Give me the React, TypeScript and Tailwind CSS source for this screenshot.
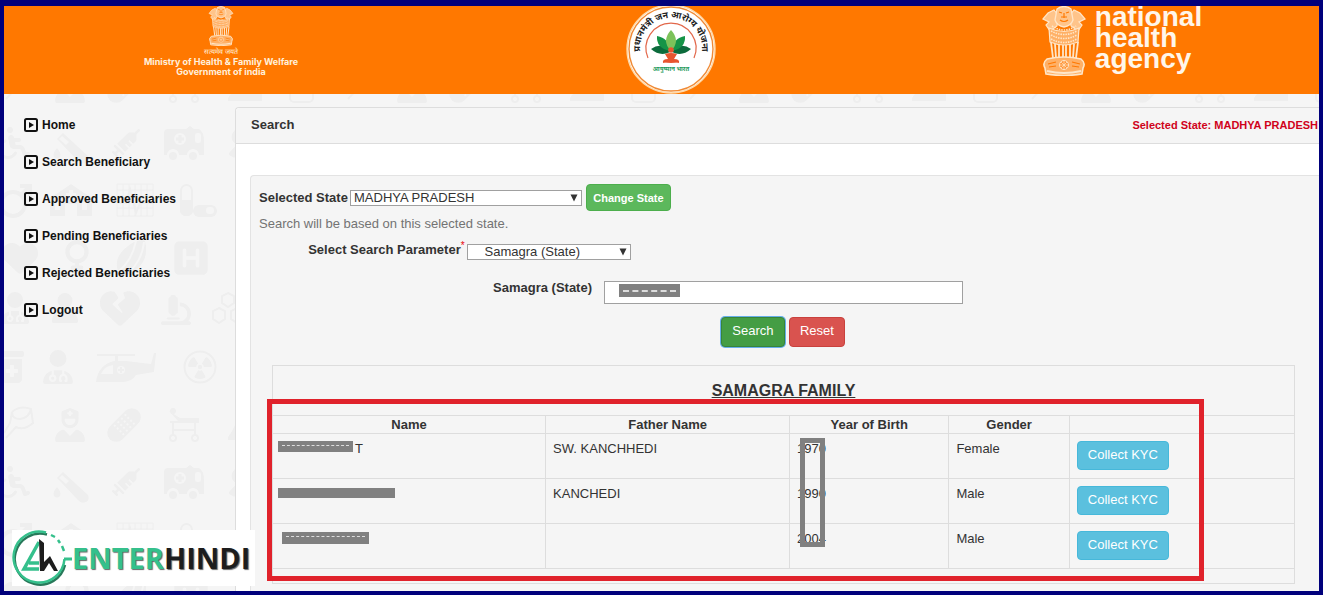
import { useState } from 'react';
import type { ReactNode } from 'react';
import {
  FaHeart,
  FaHeartCrack,
  FaMicroscope,
  FaPrescriptionBottleMedical,
  FaRadiation,
  FaRibbon,
  FaSquareH,
  FaSyringe,
  FaUser,
  FaUserDoctor,
  FaUserNurse,
  FaVenus,
  FaWheelchair,
} from 'react-icons/fa6';

interface Member {
  name: ReactNode;
  father: string;
  year: string;
  gender: string;
}

const menuItems = [
  'Home',
  'Search Beneficiary',
  'Approved Beneficiaries',
  'Pending Beneficiaries',
  'Rejected Beneficiaries',
  'Logout',
];

// Each entry: icon, centre x, centre y, size
const patternIcons = [
  [FaWheelchair, 14, 28, 32],
  [FaRibbon, 241, 28, 30],
  [FaHeart, 20, 143, 36],
  [FaVenus, 77, 142, 34],
  [FaSquareH, 191, 143, 38],
  [FaUserDoctor, 15, 193, 32],
  [FaUser, 65, 193, 30],
  [FaHeartCrack, 120, 193, 40],
  [FaMicroscope, 176, 195, 30],
  [FaPrescriptionBottleMedical, 12, 252, 32],
  [FaUserDoctor, 58, 252, 34],
  [FaRadiation, 200, 252, 24],
  [FaUserNurse, 70, 310, 34],
] as const;

// One tile of the wallpaper, drawn in tile coordinates
const PatternTile = () => (
  <g fill="currentColor" stroke="currentColor" strokeWidth="0">
    {patternIcons.map(([Icon, cx, cy, size], i) => (
      <Icon key={i} x={cx - size / 2} y={cy - size / 2} size={size} />
    ))}
    {/* test tube */}
    <path d="M63 18 L88 41 Q90 46 86 48 Q82 50 79 47 L57 24 Z" />
    <path d="M62 21 L69 27 L66 30 L59 24 Z" fill="#f5f5f5" />
    <path d="M57 33 Q62 39 60 42 Q57 45 54 42 Q52 39 57 33 Z" />
    <g transform="rotate(180 126 28)">
      <FaSyringe x={112} y={14} size={28} />
    </g>
    {/* ambulance */}
    <path d="M168 14 H186 L190 11 L194 14 H199 Q204 17 204 26 V40 H199 A6 6 0 0 0 187 40 H179 A6 6 0 0 0 167 40 H164 V18 Q164 14 168 14 Z" />
    <circle cx="180" cy="24" r="6" fill="#f5f5f5" />
    <path d="M178.500 20 H181.500 V22.500 H184 V25.500 H181.500 V28 H178.500 V25.500 H176 V22.500 H178.500 Z" />
    <rect x="195" y="18" width="6" height="10" rx="2" fill="#f5f5f5" />
    <circle cx="173" cy="41" r="4" />
    <circle cx="193" cy="41" r="4" />
    {/* male sign */}
    <g fill="none" strokeWidth="4">
      <circle cx="13" cy="89" r="12" />
      <path d="M21 80 L29 72 M20 71 H30 V81" />
    </g>
    {/* clinic */}
    <path d="M50 101 V82 L58 78 L71 69 L84 78 L92 82 V101 Z" />
    <path d="M69 75 H73 V78 H76 V82 H73 V85 H69 V82 H66 V78 H69 Z M55 87 H60 V95 H55 Z M65 89 H77 V101 H65 Z M82 87 H87 V95 H82 Z" fill="#f5f5f5" />
    {/* cardiogram paper */}
    <path
      d="M117 69 V101 M123 69 V101 M129 69 V101 M135 69 V101 M141 69 V101 M147 69 V101 M153 69 V101 M117 69 H153 M117 75 H153 M117 81 H153 M117 87 H153 M117 93 H153 M117 101 H153"
      fill="none"
      strokeWidth="1"
    />
    <path d="M117 88 H126 L130 74 L136 98 L140 88 H153" fill="none" strokeWidth="2" />
    {/* pills */}
    <rect x="181" y="70" width="11" height="30" rx="5.500" fill="none" strokeWidth="2" />
    <path d="M180 85 H193 V95 Q193 101 186.500 101 Q180 101 180 95 Z" />
    <rect x="193" y="90" width="24" height="12" rx="6" />
    <rect x="206" y="92" width="8" height="7" rx="3" fill="#f5f5f5" />
    {/* tablets */}
    <path d="M118 156 Q112 140 134 127 Q142 124 145 126 Q150 146 133 157 Q124 162 118 156 Z" />
    <path d="M118 157 Q132 146 136 126 M128 158 Q142 146 144 127" fill="none" stroke="#f5f5f5" strokeWidth="2" />
    {/* molecule */}
    <path
      d="M228 178 L234 181 V188 L228 192 L222 188 V181 Z M219 193 L225 196 V204 L219 208 L213 204 V196 Z M237 193 L243 196 V204 L237 208 L231 204 V196 Z"
      fill="none"
      strokeWidth="2"
    />
    {/* helicopter */}
    <path d="M97 239 H135 V241 H97 Z M115 241 H118 V246 H115 Z" />
    <path d="M96 267 Q98 250 114 246 H126 L151 249 L154 238 H156 L154 257 L136 260 Q132 267 122 267 Z" />
    <path d="M101 259 Q104 251 113 250 V259 Z" fill="#f5f5f5" />
    <circle cx="121" cy="255" r="4" fill="#f5f5f5" />
    <path d="M120 252 H122 V254 H124 V256 H122 V258 H120 V256 H118 V254 H120 Z" />
    <circle cx="200" cy="252" r="15.500" fill="none" strokeWidth="2" />
    {/* plaster roll */}
    <path d="M12 297 Q20 290 31 294 L33 308 Q24 316 16 312 L6 323 M12 297 Q12 304 20 304 Q29 303 31 294 M12 297 L10 308 L4 318" fill="none" strokeWidth="2" />
    {/* adhesive bandage */}
    <g transform="rotate(-45 124 310)">
      <rect x="104" y="301" width="40" height="18" rx="9" />
      <path d="M116 304 H133 M116 308 H133 M116 312 H133 M116 316 H133" stroke="#f5f5f5" strokeWidth="2" strokeDasharray="2 3" />
    </g>
    {/* stretcher */}
    <path d="M169 296 L180 303 H199 V308 H170 V306 H178 Z" />
    <circle cx="173" cy="296" r="3" />
    <path d="M173 308 V321 M195 308 V321 M173 315 H195" strokeWidth="2" />
    <g fill="none" strokeWidth="2">
      <circle cx="173" cy="323" r="3" />
      <circle cx="195" cy="323" r="3" />
      <rect x="290" y="300" width="23" height="26" rx="4" />
    </g>
    {/* shoes */}
    <path d="M228 322 Q236 312 240 294 L248 300 V318 H262 V325 H228 Z" />
    {/* bolt */}
    <path d="M350 300 L342 318 H348 L344 330 L354 315 H348 Z" transform="translate(-2 -3)" />
  </g>
);

const MedicalPattern = () => (
  <svg className="absolute inset-0 h-full w-full text-[#eeeeee]" aria-hidden="true">
    <defs>
      <pattern id="medical" x="-4" y="21" width="342" height="339" patternUnits="userSpaceOnUse">
        <PatternTile />
      </pattern>
    </defs>
    <rect width="100%" height="100%" fill="url(#medical)" />
  </svg>
);

const Emblem = ({ className }: { className: string }) => (
  <svg viewBox="0 0 46 70" className={className} fill="none" stroke="#ffe6c8" aria-hidden="true">
    {/* side lions */}
    <path d="M2 13 L7 7 L13 4 L17 9 L16 20 L9 25 L5 19 L8 16 Z" fill="#ffc48a" strokeWidth="1.2" />
    <path d="M44 13 L39 7 L33 4 L29 9 L30 20 L37 25 L41 19 L38 16 Z" fill="#ffc48a" strokeWidth="1.2" />
    {/* front lion */}
    <path d="M16 3 Q23 -2 30 3 L32 14 Q30 20 23 21 Q16 20 14 14 Z" fill="#ffc48a" strokeWidth="1.3" />
    <path d="M18 6 L21 7 M28 6 L25 7 M23 7 V12 M19 14 Q23 17 27 14 M20 11 H26" stroke="#ff7800" strokeWidth="1.2" />
    <path d="M8 22 Q23 29 38 22 L37 36 Q23 42 9 36 Z" fill="#ffb066" strokeWidth="1.2" />
    <path
      d="M10 25 Q23 32 36 25 M10 29 Q23 36 36 29 M10 33 Q23 40 36 33 M11 20 Q23 28 35 20"
      strokeWidth="1.6"
      strokeDasharray="1.5 1"
    />
    {/* legs */}
    <path d="M10 36 L12 52 M14 38 L15 52 M18 38 V53 M22 39 V53 M25 39 V53 M29 38 V53 M33 38 L32 52 M37 36 L35 52" strokeWidth="1.8" />
    {/* abacus */}
    <path d="M6 53 Q23 49 40 53 Q45 57 42 62 L41 68 Q23 71 5 68 L4 62 Q1 57 6 53 Z" fill="#ffb066" strokeWidth="1.6" />
    <circle cx="23" cy="59" r="4.5" strokeWidth="1" fill="#ff9234" />
    <path d="M18.5 59 H27.5 M23 54.5 V63.5 M20 56 L26 62 M26 56 L20 62" strokeWidth="0.7" />
    <path d="M7 58 L15 56 M8 61 L15 60 M31 56 L39 58 M31 60 L38 61" stroke="#ff7800" strokeWidth="1.2" />
    <path d="M6 65 Q23 69 40 65" strokeWidth="1.8" />
  </svg>
);

const YojanaLogo = () => (
  <svg viewBox="0 0 90 88" className="h-[88px] w-[90px]" role="img" aria-label="Ayushman Bharat">
    <circle cx="45" cy="43" r="44" fill="#fff" stroke="#ffd9a8" strokeWidth="1.4" />
    <circle cx="45" cy="43" r="42" fill="#fff" stroke="#f08a35" strokeWidth="1.4" />
    <path d="M22 52 A25 25 0 1 1 68 52" fill="none" stroke="#e2674a" strokeWidth="1.2" />
    <path id="arc" d="M18 58 A31 31 0 1 1 72 58" fill="none" />
    <text fontSize="9" fontWeight="700" fill="#222" fontFamily="Noto Sans, Noto Sans Devanagari, sans-serif">
      <textPath href="#arc" startOffset="50%" textAnchor="middle">
        प्रधानमंत्री जन आरोग्य योजना
      </textPath>
    </text>
    <path d="M44 46 Q34 51 25 43 Q36 35 44 46 Z" fill="#0c6b3c" />
    <path d="M46 46 Q56 51 65 43 Q54 35 46 46 Z" fill="#0c6b3c" />
    <path d="M44 45 Q30 42 31 30 Q43 32 44 45 Z" fill="#159447" />
    <path d="M46 45 Q60 42 59 30 Q47 32 46 45 Z" fill="#159447" />
    <path d="M45 45 Q35 35 45 24 Q55 35 45 45 Z" fill="#7cc25a" />
    <circle cx="45" cy="44" r="2.8" fill="#e8552f" />
    <path d="M39 48 Q45 46 51 48 L48 53 Q54 53 53 57 Q45 54 37 57 Q36 53 42 53 Z" fill="#e8552f" />
    <path d="M37 56 Q45 53 53 56 Q45 58 37 56 Z" fill="#e8552f" />
    <text
      x="45"
      y="65"
      textAnchor="middle"
      fontSize="6"
      fontWeight="700"
      fill="#22995a"
      fontFamily="Noto Sans, Noto Sans Devanagari, sans-serif"
    >
      आयुष्मान भारत
    </text>
  </svg>
);

const Header = () => (
  <header className="grid h-[88px] grid-cols-[434fr_466fr_415fr] bg-[#ff7800]">
    <div className="flex flex-col items-center text-[#fff1dd]">
      <Emblem className="h-10 w-7" />
      <p className="text-[7px] leading-[11px]">सत्यमेव जयते</p>
      <p className="text-center font-[Inter] text-[9px] leading-[10px] font-bold">
        Ministry of Health &amp; Family Welfare
        <br />
        Government of india
      </p>
    </div>
    <div className="flex justify-center">
      <YojanaLogo />
    </div>
    <div className="flex justify-center gap-2 pl-5">
      <Emblem className="h-[70px] w-[46px]" />
      <p className="text-[28px] leading-[21px] font-bold text-[#fff6ea]">
        national
        <br />
        health
        <br />
        agency
      </p>
    </div>
  </header>
);

const Sidebar = () => (
  <nav className="w-[231px] shrink-0 pt-3 pl-5">
    <ul>
      {menuItems.map((item) => (
        <li key={item}>
          <a href="#" className="flex h-[37px] items-center gap-1 text-xs font-bold text-[#111]">
            <svg viewBox="0 0 14 14" className="h-3.5 w-3.5" aria-hidden="true">
              <rect x="1" y="1" width="12" height="12" rx="1.5" fill="none" stroke="#111" strokeWidth="2" />
              <path d="M5 4 L10 7 L5 10 Z" fill="#111" />
            </svg>
            {item}
          </a>
        </li>
      ))}
    </ul>
  </nav>
);

const DropArrow = () => (
  <svg viewBox="0 0 8 8" className="pointer-events-none absolute top-1 right-1 h-2 w-2" aria-hidden="true">
    <path d="M0.5 0.5 H7.5 L4 7.5 Z" fill="#333" />
  </svg>
);

const members: Member[] = [
  {
    name: (
      <span className="flex items-start">
        <span className="mt-0.5 -ml-0.5 h-[11px] w-[75px] bg-[#808080] pt-1">
          <span className="mx-1 block border-t border-dashed border-[#ddd]" />
        </span>
        <span className="ml-0.5">T</span>
      </span>
    ),
    father: 'SW. KANCHHEDI',
    year: '1970',
    gender: 'Female',
  },
  {
    name: <span className="mt-1 -ml-0.5 block h-2.5 w-[117px] bg-[#808080]" />,
    father: 'KANCHEDI',
    year: '1990',
    gender: 'Male',
  },
  {
    name: (
      <span className="mt-[3px] ml-0.5 block h-3 w-[87px] bg-[#808080] pt-1">
        <span className="mx-1 block border-t border-dashed border-[#ddd]" />
      </span>
    ),
    father: '',
    year: '2004',
    gender: 'Male',
  },
];

const FamilyTable = () => (
  <section className="relative mt-[18px] mr-6 ml-[21px] border border-[#ddd] pb-3.5">
    <h2 className="flex h-[49px] items-center justify-center text-base font-bold underline">SAMAGRA FAMILY</h2>
    <table className="w-full table-fixed border-collapse text-[13px] leading-5">
      <thead>
        <tr className="h-[18px] border-y border-[#ddd] leading-4">
          <th className="w-[26.7%] border-r border-[#ddd]">Name</th>
          <th className="w-[23.9%] border-r border-[#ddd]">Father Name</th>
          <th className="w-[15.6%] border-r border-[#ddd]">Year of Birth</th>
          <th className="w-[11.8%] border-r border-[#ddd]">Gender</th>
          <th aria-label="Action" />
        </tr>
      </thead>
      <tbody>
        {members.map((member, index) => (
          <tr key={index} className="h-[45px] border-b border-[#ddd] align-top">
            <td className="border-r border-[#ddd] px-[7px] pt-[5px]">{member.name}</td>
            <td className="border-r border-[#ddd] px-[7px] pt-[5px]">{member.father}</td>
            <td className="border-r border-[#ddd] px-[7px] pt-[5px]">{member.year}</td>
            <td className="border-r border-[#ddd] px-[7px] pt-[5px]">{member.gender}</td>
            <td className="px-[7px] pt-[7px]">
              <button
                type="button"
                className="block h-[29px] w-[92px] rounded border border-[#46b8da] bg-[#5bc0de] pb-0.5 text-white"
              >
                Collect KYC
              </button>
            </td>
          </tr>
        ))}
      </tbody>
    </table>
    <div className="pointer-events-none absolute top-[72px] left-[527px] h-[109px] w-[25px] border-[5px] border-[#808080]" />
    <div className="pointer-events-none absolute top-[33px] right-[90px] bottom-0.5 -left-1.5 border-[5px] border-[#e0222b]" />
  </section>
);

const SearchForm = () => {
  const [state, setState] = useState('MADHYA PRADESH');
  const [parameter, setParameter] = useState('Samagra (State)');

  return (
    <form onSubmit={(e) => e.preventDefault()}>
      <div className="flex items-center pl-2">
        <label htmlFor="state" className="w-[91px] font-bold whitespace-nowrap">
          Selected State
        </label>
        <div className="relative w-[232px]">
          <select
            id="state"
            value={state}
            onChange={(e) => setState(e.target.value)}
            className="block h-4 w-full appearance-none border border-[#a0a0a0] bg-white pl-[3px] leading-3.5"
          >
            <option>MADHYA PRADESH</option>
          </select>
          <DropArrow />
        </div>
        <button
          type="button"
          className="ml-1 h-[27px] w-[85px] rounded-sm border border-[#4cae4c] bg-[#5cb85c] text-[11px] font-bold text-white"
        >
          Change State
        </button>
      </div>
      <p className="mt-[3px] pl-2 text-[#737373]">Search will be based on this selected state.</p>

      <div className="mt-1.5 flex items-center gap-0.5">
        <label htmlFor="parameter" className="w-1/5 text-right font-bold whitespace-nowrap">
          Select Search Parameter<span className="align-top text-[10px] leading-3 font-normal text-red-600">*</span>
        </label>
        <div className="relative mt-1 w-41">
          <select
            id="parameter"
            value={parameter}
            onChange={(e) => setParameter(e.target.value)}
            className="block h-4 w-full appearance-none border border-[#a0a0a0] bg-white pl-[17px] leading-3.5"
          >
            <option>Samagra (State)</option>
          </select>
          <DropArrow />
        </div>
      </div>

      <div className="mt-[18px] grid grid-cols-[353fr_359fr_356fr]">
        <label htmlFor="samagra" className="pr-3 text-right font-bold">
          Samagra (State)
        </label>
        <div className="relative mt-[3px]">
          <input id="samagra" type="text" className="block h-[23px] w-full border border-[#a0a0a0] bg-white px-4" />
          <div className="absolute top-[3px] left-[15px] h-[13px] w-[61px] bg-[#808080] pt-1.5">
            <div className="mx-1 border-t-2 border-dashed border-[#ddd]" />
          </div>
        </div>
      </div>

      <div className="mt-[13px] flex gap-1 pl-[44%]">
        <button
          type="submit"
          className="h-[30px] w-16 rounded border border-[#398439] bg-[#449d44] pb-0.5 text-white ring-1 ring-[#66afe9]"
        >
          Search
        </button>
        <button type="reset" className="h-[30px] w-14 rounded border border-[#c9413d] bg-[#d9534f] pb-0.5 text-white">
          Reset
        </button>
      </div>
    </form>
  );
};

const Watermark = () => (
  <div className="absolute bottom-[5px] left-2 flex h-14 w-[243px] items-center bg-white">
    <svg viewBox="0 0 60 56" className="h-14 w-[60px] shrink-0" aria-hidden="true">
      <g fill="none" strokeWidth="2.5">
        <path d="M34 3.5 A25.500 25.500 0 1 0 52 34" stroke="#28795a" transform="translate(1 1)" />
        <path d="M34 2.5 A25.500 25.500 0 1 0 52.500 29" stroke="#35c08c" />
        <path d="M39 5 L43 7 M46 10 L48 13 M50 16 L52 21" stroke="#35c08c" />
      </g>
      <path d="M27 12 L12 39 H27 M17 33 H27" fill="none" stroke="#35c08c" strokeWidth="3.5" />
      <path d="M27 9 L32 13 V32 L38 26 L46 41 H42 L37 33 L32 41 H28 Z" fill="#1d1d1d" />
      <path d="M52 29 H60" stroke="#35c08c" strokeWidth="3" />
    </svg>
    <span className="font-['Open_Sans'] text-[29px] leading-8 font-bold text-[#35c08c] [text-shadow:1px_1px_1px_#666]">
      ENTER<span className="text-[#1d1d1d]">HINDI</span>
    </span>
  </div>
);

export default function App() {
  return (
    <div className="relative border-x-4 border-t-[6px] border-b-4 border-[#00007b] bg-[#f5f5f5] font-['Liberation_Sans',Arial,sans-serif] text-[13px] leading-5 text-[#333]">
      <Header />
      <div className="relative">
        <MedicalPattern />
        <div className="relative flex">
          <Sidebar />
          <main className="mt-[13px] min-w-0 flex-1 rounded-tl border-t border-l border-[#ddd] bg-white">
            <div className="flex h-9 items-center justify-between rounded-tl border-b border-[#ddd] bg-[#f5f5f5] pr-px pb-0.5 pl-[15px]">
              <h1 className="font-bold">Search</h1>
              <span className="text-[11px] font-bold text-[#d0021b]">Selected State: MADHYA PRADESH</span>
            </div>
            <div className="pt-[31px] pl-3.5">
              <div className="rounded-tl border-t border-l border-[#e3e3e3] bg-[#f5f5f5] pt-2 pb-[7px]">
                <SearchForm />
                <FamilyTable />
              </div>
            </div>
          </main>
        </div>
      </div>
      <Watermark />
    </div>
  );
}
